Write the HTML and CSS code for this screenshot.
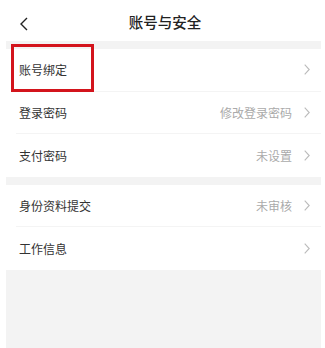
FILE: index.html
```html
<!DOCTYPE html>
<html lang="zh-CN">
<head>
<meta charset="utf-8">
<link rel="stylesheet" href="styles.css">
</head>
<body>
<div class="page">
  <header class="topbar">
    <svg class="back" width="10" height="14" viewBox="0 0 10 14"><path d="M8 1 L2 7 L8 13" fill="none" stroke="#222" stroke-width="1.4"/></svg>
    <div class="title">账号与安全</div>
  </header>
  <div class="band"></div>
  <div class="group">
    <div class="row highlighted">
      <span class="label">账号绑定</span>
      <span class="value"></span>
      <svg class="chev" width="6" height="11" viewBox="0 0 6 11"><path d="M0.7 0.7 L5.2 5.5 L0.7 10.3" fill="none" stroke="#bbb" stroke-width="1.1"/></svg>
    </div>
    <div class="row">
      <span class="label">登录密码</span>
      <span class="value">修改登录密码</span>
      <svg class="chev" width="6" height="11" viewBox="0 0 6 11"><path d="M0.7 0.7 L5.2 5.5 L0.7 10.3" fill="none" stroke="#bbb" stroke-width="1.1"/></svg>
    </div>
    <div class="row last">
      <span class="label">支付密码</span>
      <span class="value">未设置</span>
      <svg class="chev" width="6" height="11" viewBox="0 0 6 11"><path d="M0.7 0.7 L5.2 5.5 L0.7 10.3" fill="none" stroke="#bbb" stroke-width="1.1"/></svg>
    </div>
  </div>
  <div class="band"></div>
  <div class="group">
    <div class="row">
      <span class="label">身份资料提交</span>
      <span class="value">未审核</span>
      <svg class="chev" width="6" height="11" viewBox="0 0 6 11"><path d="M0.7 0.7 L5.2 5.5 L0.7 10.3" fill="none" stroke="#bbb" stroke-width="1.1"/></svg>
    </div>
    <div class="row last">
      <span class="label">工作信息</span>
      <span class="value"></span>
      <svg class="chev" width="6" height="11" viewBox="0 0 6 11"><path d="M0.7 0.7 L5.2 5.5 L0.7 10.3" fill="none" stroke="#bbb" stroke-width="1.1"/></svg>
    </div>
  </div>
  <div class="filler"></div>
</div>
</body>
</html>
```
FILE: styles.css
```css
html, body {
  margin: 0;
  padding: 0;
  background: #fff;
}
body {
  font-family: "Noto Sans CJK SC", "Noto Sans", sans-serif;
  width: 325px;
  height: 348px;
  overflow: hidden;
}
.page {
  margin: 0 4px 0 6px;
  height: 348px;
  display: flex;
  flex-direction: column;
}
.topbar {
  height: 41px;
  position: relative;
  display: flex;
  align-items: center;
  justify-content: center;
}
.back {
  position: absolute;
  left: 13px;
  top: 17px;
}
.title {
  font-size: 14.5px;
  font-weight: 500;
  color: #222;
  margin-left: 3px;
  margin-top: 2px;
}
.band {
  height: 8px;
  background: #f3f3f3;
}
.group {
  background: #fff;
}
.row {
  height: 42.5px;
  box-sizing: border-box;
  display: flex;
  align-items: center;
  margin-left: 10px;
  padding-right: 11px;
  border-bottom: 1px solid #f4f4f4;
  position: relative;
}
.row.last {
  border-bottom: none;
}
.label {
  font-size: 12px;
  color: #333;
  margin-left: 3px;
  flex: 1;
}
.value {
  font-size: 12px;
  color: #aaa;
  margin-right: 12px;
}
.chev {
  display: block;
}
.highlighted::after {
  content: "";
  position: absolute;
  left: -5px;
  top: -5px;
  width: 77px;
  height: 42px;
  border: 3px solid #d3141c;
}
.filler {
  flex: 1;
  background: #f3f3f3;
}
```
